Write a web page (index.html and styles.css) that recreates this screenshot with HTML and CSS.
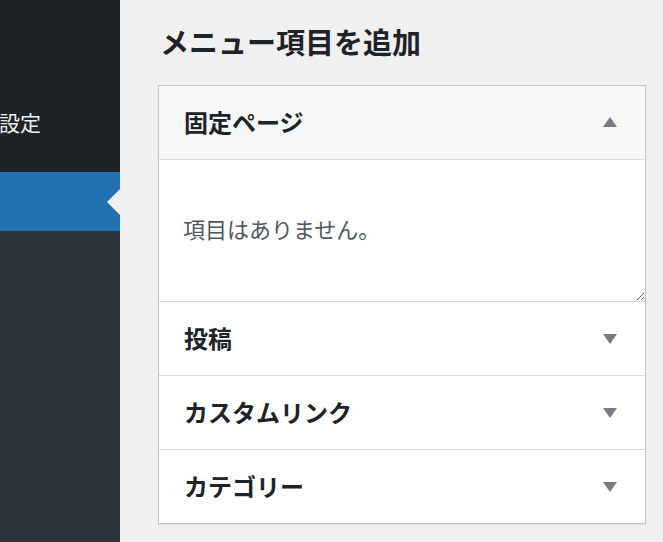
FILE: index.html
```html
<!DOCTYPE html>
<html lang="ja">
<head>
    <meta charset="UTF-8">
    <meta name="viewport" content="width=device-width, initial-scale=1.0">
    <title>メニュー</title>
    <link rel="stylesheet" href="styles.css">
</head>
<body>
    <nav class="admin-menu">
        <div class="menu-top"></div>
        <div class="menu-item">設定</div>
        <div class="menu-item current"></div>
        <div class="menu-rest"></div>
    </nav>
    <main>
        <h2>メニュー項目を追加</h2>
        <div class="accordion">
            <div class="acc-section open">
                <div class="acc-title">
                    <span>固定ページ</span>
                    <span class="arrow up"></span>
                </div>
                <div class="acc-content">
                    <p>項目はありません。</p>
                </div>
            </div>
            <div class="acc-section">
                <div class="acc-title">
                    <span>投稿</span>
                    <span class="arrow"></span>
                </div>
            </div>
            <div class="acc-section">
                <div class="acc-title">
                    <span>カスタムリンク</span>
                    <span class="arrow"></span>
                </div>
            </div>
            <div class="acc-section">
                <div class="acc-title">
                    <span>カテゴリー</span>
                    <span class="arrow"></span>
                </div>
            </div>
        </div>
    </main>
</body>
</html>
```

FILE: styles.css
```css
html, body {
    height: 100%;
}

body {
    margin: 0;
    display: flex;
    background-color: #f0f0f1;
    font-family: "Noto Sans CJK JP", "Noto Sans", sans-serif;
    color: #1d2327;
    overflow: hidden;
}

.admin-menu {
    width: 120px;
    flex-shrink: 0;
    display: flex;
    flex-direction: column;
    background-color: #2c3338;
}

.menu-top {
    height: 100px;
    background-color: #1d2327;
}

.menu-item {
    height: 72px;
    padding-top: 4px;
    box-sizing: border-box;
    background-color: #1d2327;
    color: #f0f0f1;
    font-size: 21px;
    line-height: 36px;
    text-indent: -1px;
}

.menu-item.current {
    position: relative;
    height: 59px;
    padding: 0;
    background-color: #2271b1;
}

.menu-item.current::after {
    content: "";
    position: absolute;
    right: 0;
    top: 50%;
    margin-top: -13px;
    border-right: 13px solid #f0f0f1;
    border-top: 13px solid transparent;
    border-bottom: 13px solid transparent;
}

.menu-rest {
    flex: 1;
}

main {
    flex: 1;
    padding: 18px 17px 0 38px;
}

main h2 {
    margin: 0 0 21px 2px;
    font-size: 29px;
    font-weight: 700;
    line-height: 46px;
    color: #1d2327;
}

.accordion {
    background-color: #fff;
    border: 1px solid #c3c4c7;
    box-shadow: 0 1px 1px rgba(0, 0, 0, 0.06);
}

.acc-section + .acc-section {
    border-top: 1px solid #dcdcde;
}

.acc-title {
    height: 73px;
    box-sizing: border-box;
    display: flex;
    align-items: center;
    justify-content: space-between;
    padding: 0 28px 2px 25px;
    font-size: 24px;
    font-weight: 700;
}

.arrow {
    width: 0;
    height: 0;
    margin-top: 2px;
    border-left: 7px solid transparent;
    border-right: 7px solid transparent;
    border-top: 10px solid #787c82;
}

.open .acc-title {
    height: 74px;
    background-color: #f6f7f7;
    border-bottom: 1px solid #dcdcde;
}

.arrow.up {
    margin-top: 0;
    border-top: none;
    border-bottom: 10px solid #787c82;
}

.acc-content {
    height: 141px;
    overflow: auto;
    resize: vertical;
    box-sizing: border-box;
    padding: 0 24px 6px;
    display: flex;
    align-items: center;
}

.acc-content p {
    margin: 0;
    font-size: 22px;
    color: #50575e;
}
```
